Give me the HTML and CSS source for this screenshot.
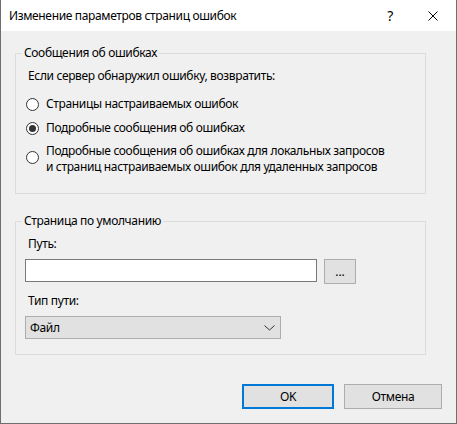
FILE: index.html
```html
<!DOCTYPE html>
<html lang="ru">
<head>
    <meta charset="UTF-8">
    <title>Изменение параметров страниц ошибок</title>
    <link rel="stylesheet" href="styles.css">
</head>
<body>
    <div class="dialog">
        <!-- Title bar -->
        <div class="titlebar">
            <span class="title">Изменение параметров страниц ошибок</span>
            <span class="help">?</span>
            <span class="close">
                <svg width="10" height="10" viewBox="0 0 10 10">
                    <path d="M0.5 0.5 L9.5 9.5 M9.5 0.5 L0.5 9.5" stroke="#000" stroke-width="1" fill="none"/>
                </svg>
            </span>
        </div>

        <div class="content">
            <!-- Error responses -->
            <fieldset class="group group-errors">
                <legend>Сообщения об ошибках</legend>
                <p class="prompt">Если сервер обнаружил ошибку, возвратить:</p>
                <label class="option">
                    <input type="radio" name="errorMode">
                    <span>Страницы настраиваемых ошибок</span>
                </label>
                <label class="option">
                    <input type="radio" name="errorMode" checked>
                    <span>Подробные сообщения об ошибках</span>
                </label>
                <label class="option option-wide">
                    <input type="radio" name="errorMode">
                    <span>Подробные сообщения об ошибках для локальных запросов<br>и страниц настраиваемых ошибок для удаленных запросов</span>
                </label>
            </fieldset>

            <!-- Default page -->
            <fieldset class="group group-default">
                <legend>Страница по умолчанию</legend>
                <label class="field-label" for="path">Путь:</label>
                <div class="path-row">
                    <input type="text" id="path" class="path-input">
                    <button class="browse-btn">...</button>
                </div>
                <label class="field-label">Тип пути:</label>
                <div class="select">
                    <span>Файл</span>
                    <svg width="11" height="6" viewBox="0 0 11 6">
                        <polyline points="0.5,0.5 5.5,5 10.5,0.5" stroke="#333" stroke-width="1" fill="none"/>
                    </svg>
                </div>
            </fieldset>

            <div class="actions">
                <button class="btn btn-ok">OK</button>
                <button class="btn btn-cancel">Отмена</button>
            </div>
        </div>
    </div>
</body>
</html>
```

FILE: styles.css
```css
/* Dialog window */
body {
    margin: 0;
    font-family: 'Noto Sans', 'Open Sans', sans-serif;
    font-size: 12px;
    line-height: 16px;
    letter-spacing: -0.35px;
    color: #000;
    background-color: #f0f0f0;
}

.dialog {
    width: 457px;
    height: 424px;
    box-sizing: border-box;
    border: 1px solid #6e6e6e;
    border-top: none;
    background-color: #f0f0f0;
    display: flex;
    flex-direction: column;
}

.titlebar {
    height: 31px;
    background-color: #fff;
    display: flex;
    align-items: center;
    padding-left: 8px;
}

.title {
    flex: 1;
}

.help {
    width: 46px;
    margin-right: -3px;
    text-align: center;
    font-size: 14px;
}

.close {
    width: 46px;
    display: flex;
    justify-content: center;
}

.content {
    flex: 1;
    padding: 14px 30px 0 14px;
}

/* Group boxes */
.group {
    margin: 0;
    padding: 0;
    border: 1px solid #dcdcdc;
    min-width: 0;
}

.group legend {
    margin-left: 6px;
    padding: 0 2px;
}

.group-errors {
    padding-bottom: 18px;
}

.group-default {
    margin-top: 19px;
    padding-bottom: 15px;
}

.prompt {
    margin: 7px 0 0 12px;
}

.option {
    display: flex;
    align-items: center;
    margin-left: 10px;
    margin-top: 8px;
}

.option:first-of-type {
    margin-top: 12px;
}

.option-wide {
    margin-top: 7px;
}

.option input {
    appearance: none;
    -webkit-appearance: none;
    width: 13px;
    height: 13px;
    margin: 0 7px 0 0;
    border: 1px solid #333;
    border-radius: 50%;
    background-color: #fff;
    box-sizing: border-box;
    display: flex;
    align-items: center;
    justify-content: center;
}

.option-wide input {
    position: relative;
    top: -2px;
}

.option input:checked::after {
    content: "";
    width: 7px;
    height: 7px;
    border-radius: 50%;
    background-color: #333;
}

/* Default page fields */
.field-label {
    display: block;
    margin: 7px 0 0 12px;
}

.path-row {
    display: flex;
    align-items: flex-start;
    margin: 7px 0 0 9px;
    gap: 7px;
}

.path-input {
    width: 292px;
    height: 23px;
    box-sizing: border-box;
    border: 1px solid #7a7a7a;
    background-color: #fff;
    margin: 0;
}

.browse-btn {
    width: 32px;
    height: 25px;
    box-sizing: border-box;
    border: 1px solid #adadad;
    background-color: #e1e1e1;
    font-family: inherit;
    font-size: 12px;
    padding: 0;
}

.path-row + .field-label {
    margin-top: 9px;
}

.select {
    width: 256px;
    height: 23px;
    box-sizing: border-box;
    margin: 7px 0 0 9px;
    border: 1px solid #adadad;
    background-color: #e1e1e1;
    display: flex;
    align-items: center;
    justify-content: space-between;
    padding: 0 5px 0 4px;
}

/* Dialog buttons */
.actions {
    display: flex;
    justify-content: flex-end;
    gap: 10px;
    margin-top: 29px;
    margin-right: -16px;
}

.btn {
    height: 25px;
    box-sizing: border-box;
    border: 1px solid #adadad;
    background-color: #e1e1e1;
    font-family: inherit;
    font-size: 12px;
    letter-spacing: inherit;
    color: #000;
    padding: 0;
}

.btn-ok {
    width: 92px;
    border: 2px solid #0078d7;
}

.btn-cancel {
    width: 98px;
}
```
